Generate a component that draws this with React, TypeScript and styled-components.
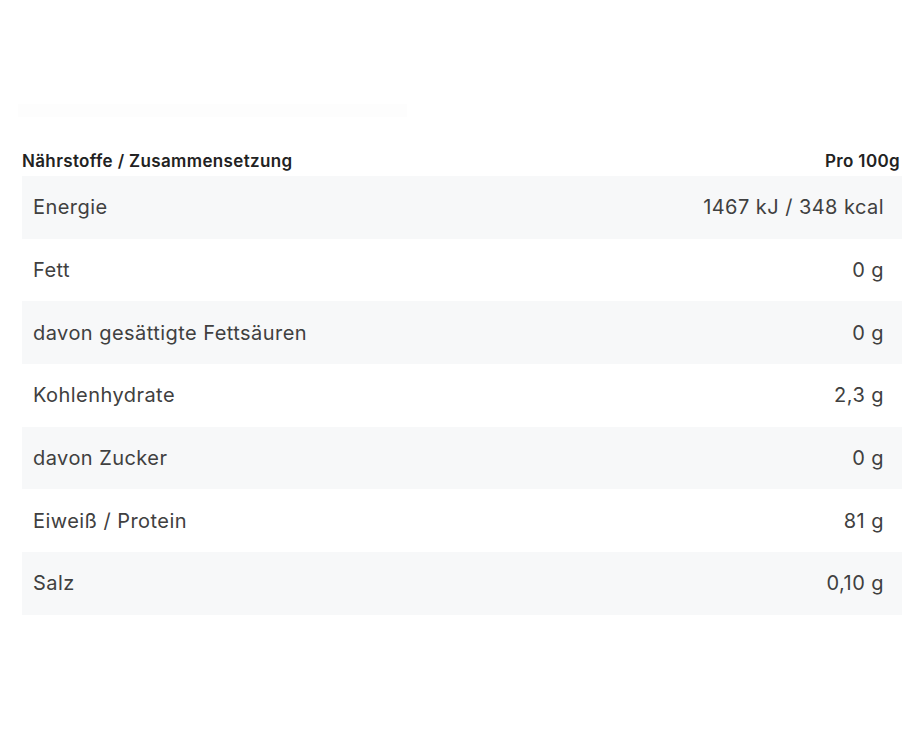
import { createGlobalStyle } from "styled-components";
import styled from "styled-components";

const GlobalStyle = createGlobalStyle`
  html, body {
    margin: 0;
    padding: 0;
    background: #ffffff;
  }
  body {
    font-family: Inter, "Noto Sans", "Liberation Sans", sans-serif;
  }
`;

const Page = styled.div`
  width: 912px;
  height: 730px;
  padding: 104px 10px 0 22px;
  box-sizing: border-box;
`;

const FaintBar = styled.div`
  width: 389px;
  height: 13px;
  margin-left: -4px;
  background: #fdfdfd;
`;

const Table = styled.div`
  margin-top: 29px;
  display: flex;
  flex-direction: column;
`;

const HeaderRow = styled.div`
  display: flex;
  justify-content: space-between;
  align-items: center;
  height: 30px;
  padding-right: 2px;
  font-size: 17px;
  font-weight: 600;
  color: #222222;
  letter-spacing: 0.35px;
`;

const Row = styled.div<{ $shaded: boolean }>`
  display: flex;
  justify-content: space-between;
  align-items: center;
  height: 62.7px;
  padding: 0 18px 0 11px;
  background: ${(p) => (p.$shaded ? "#f7f8f9" : "transparent")};
  font-size: 20px;
  letter-spacing: 0.45px;
  color: #404040;
`;

const rows: [string, string][] = [
  ["Energie", "1467 kJ / 348 kcal"],
  ["Fett", "0 g"],
  ["davon gesättigte Fettsäuren", "0 g"],
  ["Kohlenhydrate", "2,3 g"],
  ["davon Zucker", "0 g"],
  ["Eiweiß / Protein", "81 g"],
  ["Salz", "0,10 g"],
];

export default function App() {
  return (
    <>
      <GlobalStyle />
      <Page>
        <FaintBar />
        <Table>
          <HeaderRow>
            <span>Nährstoffe / Zusammensetzung</span>
            <span>Pro 100g</span>
          </HeaderRow>
          {rows.map(([label, value], i) => (
            <Row key={label} $shaded={i % 2 === 0}>
              <span>{label}</span>
              <span>{value}</span>
            </Row>
          ))}
        </Table>
      </Page>
    </>
  );
}
